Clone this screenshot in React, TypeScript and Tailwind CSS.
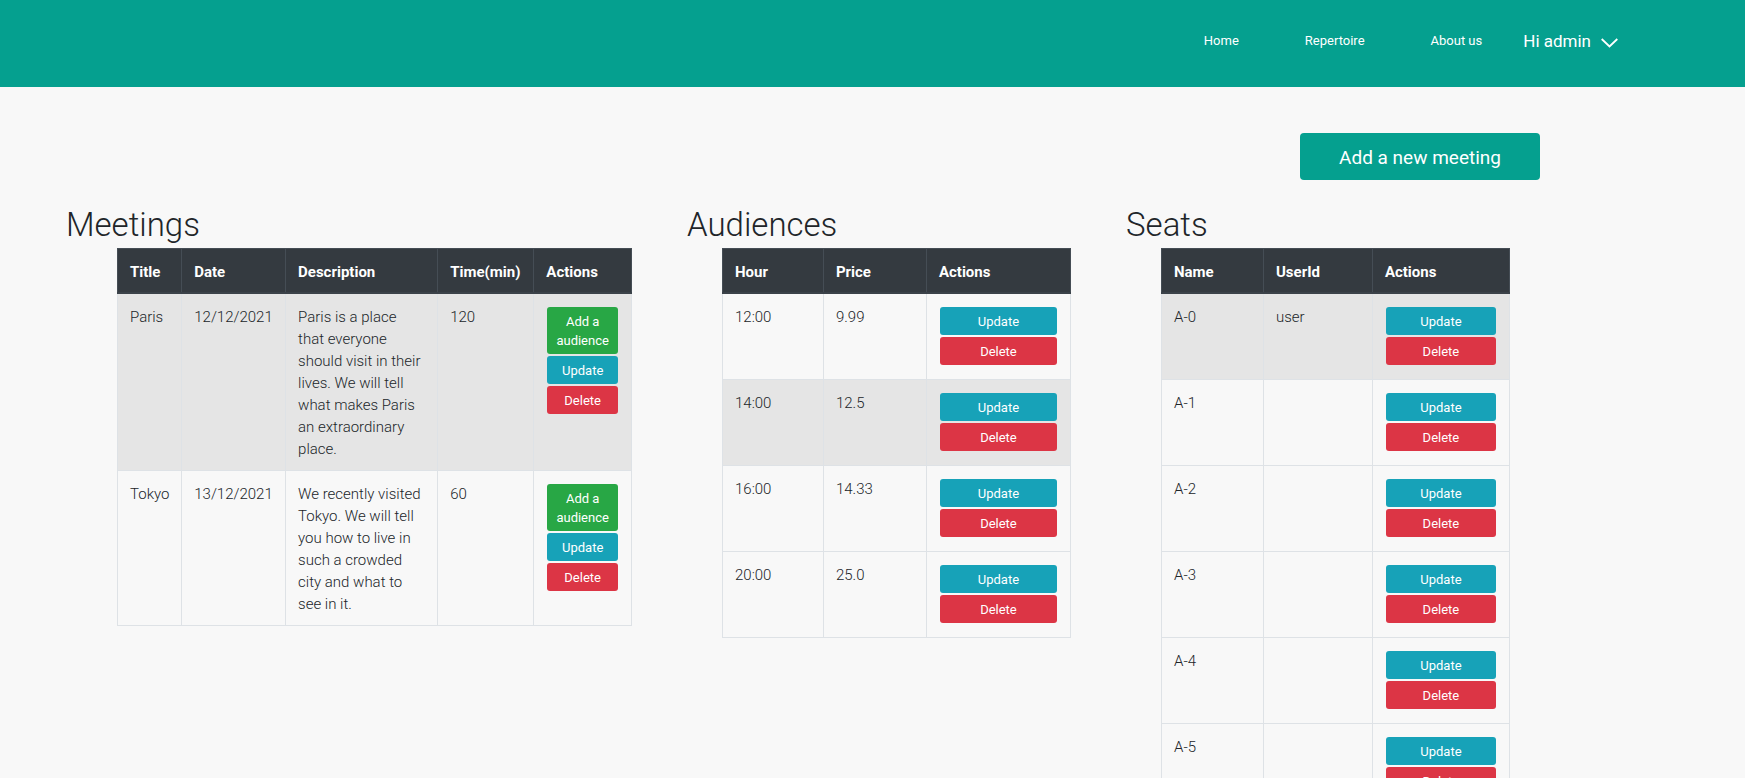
import type { ReactNode } from "react";

type ButtonTone = "success" | "info" | "danger";

const tones: Record<ButtonTone, string> = {
  success: "bg-[#28a745]",
  info: "bg-[#17a2b8]",
  danger: "bg-[#dc3545]",
};

function ActionButton({ tone, children }: { tone: ButtonTone; children: ReactNode }) {
  return (
    <button
      type="button"
      className={`w-full cursor-pointer rounded-[3px] px-2 pt-[5px] pb-1 text-[13px] leading-[19px] font-normal text-white ${tones[tone]}`}
    >
      {children}
    </button>
  );
}

function Actions({ withAdd = false }: { withAdd?: boolean }) {
  return (
    <div className="flex flex-col gap-0.5 px-px pt-px pb-1">
      {withAdd && <ActionButton tone="success">Add a audience</ActionButton>}
      <ActionButton tone="info">Update</ActionButton>
      <ActionButton tone="danger">Delete</ActionButton>
    </div>
  );
}

type Column = { label: string; width: string };

type DataTableProps = {
  id: string;
  title: string;
  indent: string;
  columns: Column[];
  rows: string[][];
  shadedRow: number;
  withAdd?: boolean;
};

function DataTable({ id, title, indent, columns, rows, shadedRow, withAdd }: DataTableProps) {
  return (
    <section aria-labelledby={id}>
      <h2 id={id} className="mb-[3px] text-[33px] leading-10 font-light">
        {title}
      </h2>
      <div className={`pr-[55px] ${indent}`}>
        <table className="w-full table-fixed border-collapse border border-[#dee2e6] text-left text-[15px] leading-[22px]">
          <thead className="bg-[#343a40] text-white">
            <tr>
              {columns.map((column) => (
                <th
                  key={column.label}
                  scope="col"
                  className={`border border-b-2 border-[#454d55] border-b-[#3b4249] pr-2 pl-3 pt-3 pb-[9px] font-bold ${column.width}`}
                >
                  {column.label}
                </th>
              ))}
            </tr>
          </thead>
          <tbody>
            {rows.map((row, index) => (
              <tr key={row[0]} className={index === shadedRow ? "bg-[#e5e5e5]" : ""}>
                {row.map((cell, cellIndex) => (
                  <td key={cellIndex} className="border border-[#dee2e6] px-3 pt-3 pb-2.5 align-top">
                    {cell}
                  </td>
                ))}
                <td className="border border-[#dee2e6] px-3 pt-3 pb-2.5 align-top">
                  <Actions withAdd={withAdd} />
                </td>
              </tr>
            ))}
          </tbody>
        </table>
      </div>
    </section>
  );
}

const meetings = [
  [
    "Paris",
    "12/12/2021",
    "Paris is a place that everyone should visit in their lives. We will tell what makes Paris an extraordinary place.",
    "120",
  ],
  [
    "Tokyo",
    "13/12/2021",
    "We recently visited Tokyo. We will tell you how to live in such a crowded city and what to see in it.",
    "60",
  ],
];

const audiences = [
  ["12:00", "9.99"],
  ["14:00", "12.5"],
  ["16:00", "14.33"],
  ["20:00", "25.0"],
];

const seats = [
  ["A-0", "user"],
  ["A-1", ""],
  ["A-2", ""],
  ["A-3", ""],
  ["A-4", ""],
  ["A-5", ""],
];

export default function App() {
  return (
    <div className="h-screen overflow-hidden bg-[#f8f8f8] font-[Roboto,sans-serif] font-light text-[#212529]">
      <header className="flex h-[87px] items-center justify-end bg-[#05a08f] pr-[127px] pb-1 text-white">
        <nav className="flex items-center gap-[66px] pb-0.5 text-[13px] font-normal">
          <a href="#home">Home</a>
          <a href="#repertoire">Repertoire</a>
          <a href="#about">About us</a>
        </nav>
        <button type="button" className="ml-[41px] flex cursor-pointer items-center gap-2.5 text-[17px] font-normal">
          Hi admin
          <svg className="mt-0.5 h-2.5 w-[17px]" viewBox="0 0 17 10" fill="none" stroke="currentColor" strokeWidth="1.8" aria-hidden="true">
            <path d="M.7 1l7.8 7.5L16.3 1" />
          </svg>
        </button>
      </header>

      <main>
        <div className="flex justify-end pt-[46px] pr-[205px]">
          <button
            type="button"
            className="cursor-pointer rounded bg-[#05a08f] px-[39px] pt-[9px] pb-[7px] text-[19px] leading-[31px] font-normal text-white"
          >
            Add a new meeting
          </button>
        </div>

        <div className="mt-[25px] grid grid-cols-[621fr_439fr_439fr] pr-[180px] pl-[66px]">
          <DataTable
            id="meetings"
            title="Meetings"
            indent="pl-[51px]"
            shadedRow={0}
            withAdd
            columns={[
              { label: "Title", width: "w-[12.5%]" },
              { label: "Date", width: "w-[20.2%]" },
              { label: "Description", width: "w-[29.6%]" },
              { label: "Time(min)", width: "w-[18.7%]" },
              { label: "Actions", width: "w-[19%]" },
            ]}
            rows={meetings}
          />
          <DataTable
            id="audiences"
            title="Audiences"
            indent="pl-[35px]"
            shadedRow={1}
            columns={[
              { label: "Hour", width: "w-[29%]" },
              { label: "Price", width: "w-[29.6%]" },
              { label: "Actions", width: "w-[41.4%]" },
            ]}
            rows={audiences}
          />
          <DataTable
            id="seats"
            title="Seats"
            indent="pl-[35px]"
            shadedRow={0}
            columns={[
              { label: "Name", width: "w-[29.3%]" },
              { label: "UserId", width: "w-[31.3%]" },
              { label: "Actions", width: "w-[39.4%]" },
            ]}
            rows={seats}
          />
        </div>
      </main>
    </div>
  );
}
